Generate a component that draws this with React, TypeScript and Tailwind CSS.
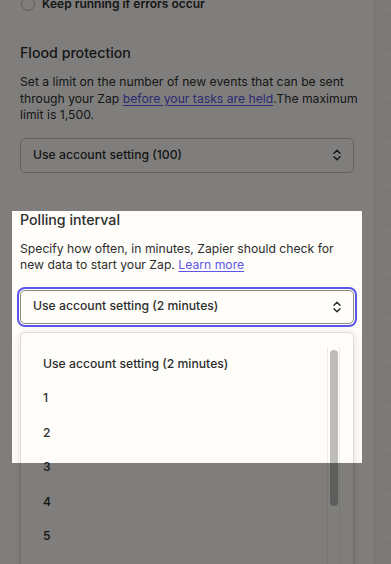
import type { ReactNode } from "react";

const options = ["Use account setting (2 minutes)", "1", "2", "3", "4", "5", "10"];

function UpDown() {
  return (
    <svg width="10" height="14" viewBox="0 0 10 14" fill="none" className="shrink-0">
      <path d="M2 5.2 5 2.2 8 5.2" stroke="#2d2e2e" strokeWidth="1.5" strokeLinecap="round" strokeLinejoin="round" />
      <path d="M2 8.8 5 11.8 8 8.8" stroke="#2d2e2e" strokeWidth="1.5" strokeLinecap="round" strokeLinejoin="round" />
    </svg>
  );
}

function SelectBox({ label, focused }: { label: string; focused?: boolean }) {
  return (
    <div
      className={
        focused
          ? "flex h-[34px] items-center justify-between rounded-[5px] border border-[#8c8b88] bg-[#fffdf9] pl-3 pr-[11px] ring-2 ring-[#5b56e8] ring-offset-1 ring-offset-[#fffdf9]"
          : "flex h-[35px] items-center justify-between rounded-[5px] border border-[#c9c7c2] bg-[#fffdf9] pl-3 pr-[11px]"
      }
    >
      <span className="text-[12.2px] font-medium text-[#2d2e2e]">{label}</span>
      <UpDown />
    </div>
  );
}

function Section({ title, children }: { title: string; children: ReactNode }) {
  return (
    <div>
      <h3 className="text-[14.2px] leading-[22px] font-medium text-[#2d2e2e]">{title}</h3>
      {children}
    </div>
  );
}

export default function App() {
  return (
    <div
      className="relative flex h-[564px] w-[391px] overflow-hidden bg-[#fffdf9]"
      style={{ fontFamily: "Inter, 'Noto Sans', sans-serif" }}
    >
      {/* settings panel */}
      <div className="w-[375px] shrink-0 border-r border-[#e3e1dc] px-5">
        <div className="-mt-[6px] flex h-[20px] items-center gap-[7px]">
          <span className="ml-px h-[14px] w-[14px] rounded-full border-[1.5px] border-[#b8b6b1]" />
          <span className="text-[12px] font-semibold text-[#2d2e2e]">Keep running if errors occur</span>
        </div>

        <div className="mt-[28px]">
          <Section title="Flood protection">
            <p className="mt-[10px] whitespace-nowrap text-[12.2px] leading-[16.5px] text-[#2d2e2e]">
              Set a limit on the number of new events that can be sent
              <br />
              through your Zap{" "}
              <a className="text-[#5b56e8] underline underline-offset-2">before your tasks are held</a>.The maximum
              <br />
              limit is 1,500.
            </p>
          </Section>
          <div className="mt-[14px]">
            <SelectBox label="Use account setting (100)" />
          </div>
        </div>

        <div className="mt-[36px]">
          <Section title="Polling interval">
            <p className="mt-[10px] whitespace-nowrap text-[12.2px] leading-[16.5px] text-[#2d2e2e]">
              Specify how often, in minutes, Zapier should check for
              <br />
              new data to start your Zap.{" "}
              <a className="text-[#5b56e8] underline underline-offset-2">Learn more</a>
            </p>
          </Section>
          <div className="mt-[16px]">
            <SelectBox label="Use account setting (2 minutes)" focused />
          </div>

          {/* open listbox */}
          <div className="mt-[8px] flex rounded-[5px] border border-[#dedcd7] bg-[#fffdf9] pt-[14px] shadow-[0_2px_8px_rgba(0,0,0,0.12)]">
            <ul className="flex-1 pl-[22px]">
              {options.map((o) => (
                <li key={o} className="flex h-[34.5px] items-center text-[12.2px] font-medium text-[#2d2e2e]">
                  {o}
                </li>
              ))}
            </ul>
            <div className="mr-[13px] flex w-[13px] justify-center border-x border-[#eceae5] pt-[3px]">
              <div className="h-[156px] w-[8px] rounded-full bg-[#bdbcba]" />
            </div>
          </div>
        </div>
      </div>

      {/* canvas edge */}
      <div className="flex-1 bg-[#f7f5f0] bg-[radial-gradient(circle,#c4c2bd_0.8px,transparent_1px)] bg-[size:10.5px_11px] bg-[position:-4px_-1px]" />

      {/* dimming overlay with spotlight */}
      <div className="pointer-events-none absolute top-[211px] left-[12px] h-[252px] w-[350px] shadow-[0_0_0_2000px_rgba(0,0,0,0.5)]" />
    </div>
  );
}
